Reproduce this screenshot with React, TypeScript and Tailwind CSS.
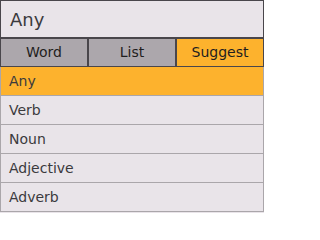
const tabs = ["Word", "List", "Suggest"];
const options = ["Any", "Verb", "Noun", "Adjective", "Adverb"];

export default function App() {
  const active = "Suggest";
  const selected = "Any";

  return (
    <div
      className="w-[264px] h-[213px] bg-[#e9e4e9] text-[#3b3a3d] flex flex-col"
      style={{ fontFamily: '"DejaVu Sans", "Open Sans", sans-serif' }}
    >
      {/* search box */}
      <div className="h-[38px] shrink-0 border border-[#49464b] flex items-center pl-[9px] text-[18px]">
        {selected}
      </div>

      {/* mode tabs */}
      <div className="flex h-[29px] shrink-0">
        {tabs.map((t) => (
          <button
            key={t}
            className={`w-[88px] border border-[#49464b] flex items-center justify-center text-[14px] text-[#1f1e20] ${
              t === active ? "bg-[#fdb22d]" : "bg-[#aca7ac]"
            }`}
          >
            {t}
          </button>
        ))}
      </div>

      {/* options */}
      <ul className="flex flex-col border-x border-[#aaa6aa]">
        {options.map((o) => (
          <li
            key={o}
            className={`h-[29px] border-b border-[#aaa6aa] flex items-center pl-[8px] text-[14px] ${
              o === selected ? "bg-[#fdb22d]" : ""
            }`}
          >
            {o}
          </li>
        ))}
      </ul>
    </div>
  );
}
